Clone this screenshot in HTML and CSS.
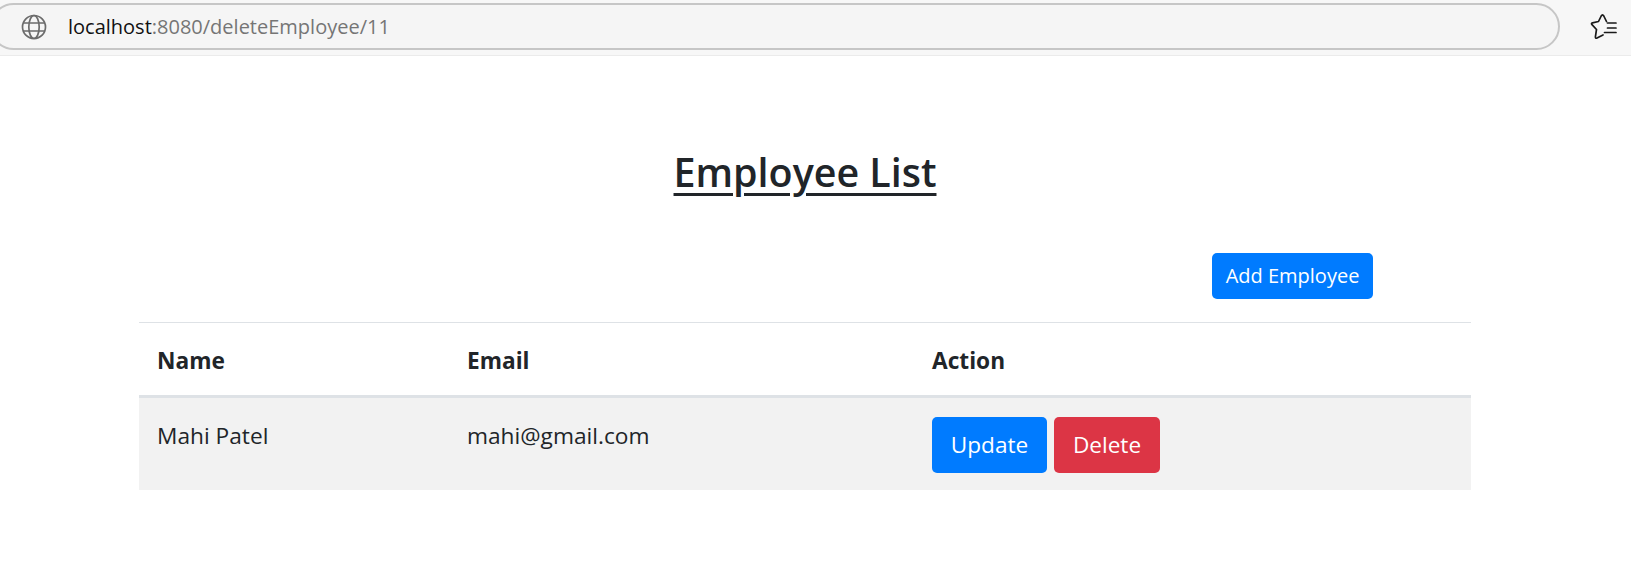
FILE: index.html
```
<!DOCTYPE html>
<html lang="en">
<head>
<meta charset="utf-8">
<title>Employee List</title>
<link rel="stylesheet" href="styles.css">
</head>
<body>
<header class="browser">
  <div class="address">
    <svg class="globe" viewBox="0 0 26 26" width="26" height="26" fill="none" stroke="#6b6b6b" stroke-width="1.700">
      <circle cx="13" cy="13" r="11.500"/>
      <ellipse cx="13" cy="13" rx="5.200" ry="11.500"/>
      <path d="M2.400 9h21.200M2.400 17h21.200"/>
    </svg>
    <span class="url"><span class="host">localhost</span>:8080/deleteEmployee/11</span>
  </div>
  <svg class="fav" viewBox="0 0 28 30" width="28" height="30" fill="none" stroke="#1a1a1a" stroke-width="1.700" stroke-linejoin="round" stroke-linecap="round">
    <path d="M17.500 10.500 14.800 5Q13.500 2.800 12.200 5L9.500 10.500 3.500 11.800Q1.800 12.300 3 13.700L7.500 18.500 6.400 25.800Q6.300 27.800 8 27L14 24"/>
    <path d="M18.500 12H27M18.500 17H27M15.500 21.500H27"/>
  </svg>
</header>
<main class="page">
  <h1 class="title">Employee List</h1>
  <div class="toolbar"><a class="btn btn-add">Add Employee</a></div>
  <table class="table">
    <thead>
      <tr><th class="col-name">Name</th><th class="col-email">Email</th><th>Action</th></tr>
    </thead>
    <tbody>
      <tr>
        <td>Mahi Patel</td>
        <td>mahi@gmail.com</td>
        <td class="actions"><a class="btn btn-lg btn-blue">Update</a><a class="btn btn-lg btn-red">Delete</a></td>
      </tr>
    </tbody>
  </table>
</main>
</body>
</html>
```
FILE: styles.css
```
* { box-sizing: border-box; }
html, body { margin: 0; padding: 0; background: #fff; }
body {
  font-family: "Open Sans", "Noto Sans", sans-serif;
  color: #212529;
  height: 583px;
  overflow: hidden;
}
.browser {
  height: 56px;
  background: #f7f7f7;
  border-bottom: 1px solid #ebebeb;
  display: flex;
  align-items: flex-start;
  padding: 3px 0 0 0;
}
.address {
  margin-left: -10px;
  width: 1570px;
  height: 47px;
  background: #f5f5f5;
  border: 2px solid #c6c6c6;
  border-radius: 24px;
  display: flex;
  align-items: center;
  padding-left: 29px;
  flex: none;
}
.globe { flex: none; }
.url {
  margin-left: 21px;
  font-size: 20px;
  color: #757575;
  white-space: nowrap;
}
.host { color: #111; }
.fav { margin: 8px 0 0 29px; flex: none; }
.page { padding: 0 160px 0 139px; }
.title {
  margin: 0;
  padding-top: 90px;
  text-align: center;
  font-size: 39.400px;
  line-height: 52px;
  font-weight: 600;
  text-decoration: underline;
  text-decoration-thickness: 3px;
  text-underline-offset: 6px;
  width: 1332px;
}
.toolbar {
  margin-top: 55px;
  width: 1234px;
  display: flex;
  justify-content: flex-end;
}
.btn {
  display: inline-block;
  color: #fff;
  border-radius: 5px;
  text-align: center;
}
.btn-add {
  width: 161px;
  height: 46px;
  line-height: 46px;
  background: #007bff;
  font-size: 20px;
}
.table {
  margin-top: 23px;
  width: 1332px;
  border-collapse: collapse;
  table-layout: fixed;
  font-size: 22.700px;
}
.table th {
  text-align: left;
  font-weight: 700;
  height: 74px;
  padding: 3px 18px 0;
  border-top: 1px solid #dee2e6;
  border-bottom: 3px solid #dee2e6;
}
.col-name { width: 310px; }
.col-email { width: 465px; }
.table td {
  background: #f2f2f2;
  height: 93px;
  padding: 21px 18px 0;
  vertical-align: top;
  line-height: 33px;
}
.table td.actions { padding: 19px 18px 0; font-size: 0; }
.btn-lg {
  height: 56px;
  line-height: 56px;
  font-size: 22.600px;
}
.btn-blue { width: 115px; background: #007bff; margin-right: 7px; }
.btn-red { width: 106px; background: #dc3545; }
```
